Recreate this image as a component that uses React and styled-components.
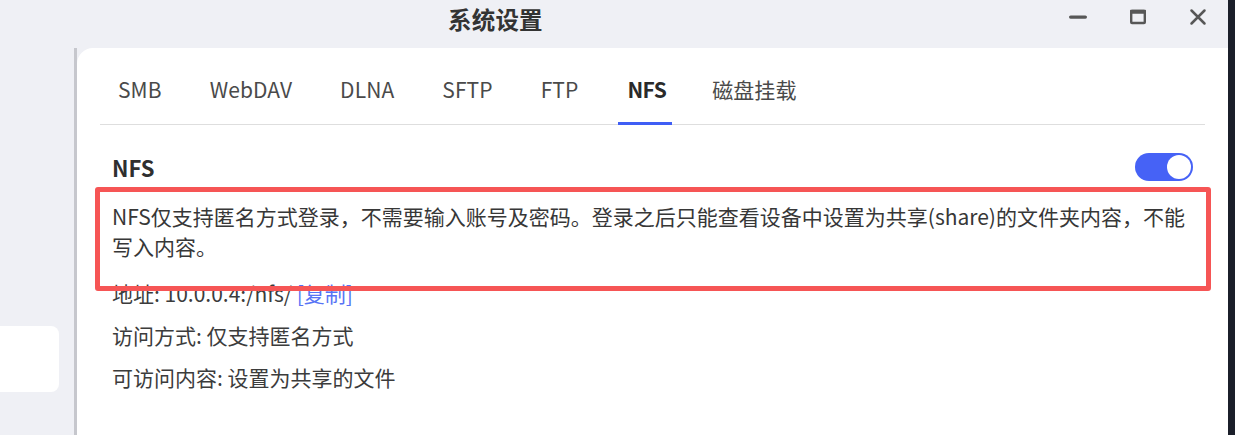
import React from "react";
import styled, { createGlobalStyle } from "styled-components";

const Global = createGlobalStyle`
  html, body { margin: 0; padding: 0; }
  body {
    width: 1235px;
    height: 435px;
    overflow: hidden;
    background: #eff0f5;
    font-family: "Noto Sans CJK SC", "Noto Sans", sans-serif;
    color: #333;
  }
`;

const Screen = styled.div`
  display: flex;
  width: 1235px;
  height: 435px;
  overflow: hidden;
`;

const Window = styled.div`
  flex: 1;
  display: flex;
  flex-direction: column;
  background: #eff0f5;
  min-width: 0;
`;

const Desktop = styled.div`
  width: 7px;
  background: #1b1f2a;
`;

const TitleBar = styled.div`
  height: 48px;
  display: flex;
  align-items: flex-start;
  flex-shrink: 0;
`;

const Title = styled.div`
  margin-left: 448px;
  margin-top: 2px;
  font-size: 23.5px;
  font-weight: 700;
  line-height: 34px;
  color: #333;
  letter-spacing: 0.2px;
`;

const Controls = styled.div`
  margin-left: auto;
  display: flex;
`;

const CtrlButton = styled.button`
  width: 60px;
  height: 34px;
  border: 0;
  background: transparent;
  padding: 0;
  display: flex;
  align-items: center;
  justify-content: center;
  color: #575757;
`;

const Body = styled.div`
  flex: 1;
  display: flex;
  min-height: 0;
`;

const Sidebar = styled.div`
  width: 74px;
  flex-shrink: 0;
  display: flex;
  flex-direction: column;
  padding-top: 278px;
`;

const SideItem = styled.div`
  width: 59px;
  height: 66px;
  background: #ffffff;
  border-radius: 0 8px 8px 0;
`;

const Splitter = styled.div`
  width: 3px;
  flex-shrink: 0;
  background: #c6c7cd;
`;

const Card = styled.div`
  flex: 1;
  background: #ffffff;
  border-top-left-radius: 16px;
  padding: 0 23px;
  display: flex;
  flex-direction: column;
  min-width: 0;
`;

const TabList = styled.div`
  display: flex;
  gap: 32px;
  padding: 26px 0 0 10px;
  border-bottom: 1px solid #dedede;
`;

const Tab = styled.div`
  padding: 0 ${(p) => (p.$active ? "6px" : "8px")} 18px ${(p) => (p.$active ? "9px" : "8px")};
  font-size: 21px;
  line-height: 30px;
  color: ${(p) => (p.$active ? "#2a2a2a" : "#4a4a4a")};
  font-weight: ${(p) => (p.$active ? 700 : 400)};
  letter-spacing: ${(p) => (p.$active ? "-0.6px" : "0.1px")};
  border-bottom: 3px solid ${(p) => (p.$active ? "#3f5ef5" : "transparent")};
  margin-bottom: -1px;
  white-space: nowrap;
`;

const Section = styled.div`
  padding: 27px 12px 0;
  display: flex;
  flex-direction: column;
`;

const HeadRow = styled.div`
  display: flex;
  align-items: center;
  justify-content: space-between;
  height: 30px;
`;

const Heading = styled.div`
  font-size: 22px;
  font-weight: 700;
  line-height: 30px;
  color: #2f2f2f;
`;

const Toggle = styled.div`
  width: 58px;
  height: 28px;
  border-radius: 14px;
  background: #4662f6;
  display: flex;
  align-items: center;
  justify-content: ${(p) => (p.$on ? "flex-end" : "flex-start")};
  padding: 0 2px;
  box-sizing: border-box;
`;

const Knob = styled.div`
  width: 24px;
  height: 24px;
  border-radius: 50%;
  background: #ffffff;
`;

const Description = styled.div`
  position: relative;
  margin-top: 19px;
  font-size: 21px;
  line-height: 30px;
  color: #373737;
`;

const Annotation = styled.div`
  position: absolute;
  left: -17px;
  right: -18px;
  top: -14px;
  bottom: -30px;
  border: 5px solid #f65555;
  border-radius: 3px;
  pointer-events: none;
  z-index: 2;
`;

const InfoRow = styled.div`
  font-size: 21px;
  line-height: 30px;
  color: #3c3c3c;
  margin-top: ${(p) => p.$gap}px;
`;

const Link = styled.span`
  color: #5874f5;
`;

const MinIcon = () => (
  <svg width="20" height="20" viewBox="0 0 20 20">
    <rect x="1" y="8.5" width="18" height="3.2" rx="1.6" fill="currentColor" />
  </svg>
);

const MaxIcon = () => (
  <svg width="20" height="20" viewBox="0 0 20 20">
    <rect x="3.2" y="4" width="13.6" height="12" fill="none" stroke="currentColor" strokeWidth="2.4" rx="0.8" />
    <rect x="2" y="2.8" width="16" height="4" fill="currentColor" rx="0.8" />
  </svg>
);

const CloseIcon = () => (
  <svg width="20" height="20" viewBox="0 0 20 20">
    <path d="M3.5 3.5 L16.5 16.5 M16.5 3.5 L3.5 16.5" stroke="currentColor" strokeWidth="2.5" strokeLinecap="round" />
  </svg>
);

const tabs = ["SMB", "WebDAV", "DLNA", "SFTP", "FTP", "NFS", "磁盘挂载"];

export default function App() {
  return (
    <>
      <Global />
      <Screen>
        <Window>
          <TitleBar>
            <Title>系统设置</Title>
            <Controls>
              <CtrlButton aria-label="minimize"><MinIcon /></CtrlButton>
              <CtrlButton aria-label="maximize"><MaxIcon /></CtrlButton>
              <CtrlButton aria-label="close"><CloseIcon /></CtrlButton>
            </Controls>
          </TitleBar>
          <Body>
            <Sidebar>
              <SideItem />
            </Sidebar>
            <Splitter />
            <Card>
              <TabList>
                {tabs.map((t) => (
                  <Tab key={t} $active={t === "NFS"}>{t}</Tab>
                ))}
              </TabList>
              <Section>
                <HeadRow>
                  <Heading>NFS</Heading>
                  <Toggle $on><Knob /></Toggle>
                </HeadRow>
                <Description>
                  NFS仅支持匿名方式登录，不需要输入账号及密码。登录之后只能查看设备中设置为共享(share)的文件夹内容，不能写入内容。
                  <Annotation />
                </Description>
                <InfoRow $gap={17}>
                  地址: 10.0.0.4:/nfs/ <Link>[复制]</Link>
                </InfoRow>
                <InfoRow $gap={12}>访问方式: 仅支持匿名方式</InfoRow>
                <InfoRow $gap={12}>可访问内容: 设置为共享的文件</InfoRow>
              </Section>
            </Card>
          </Body>
        </Window>
        <Desktop />
      </Screen>
    </>
  );
}
